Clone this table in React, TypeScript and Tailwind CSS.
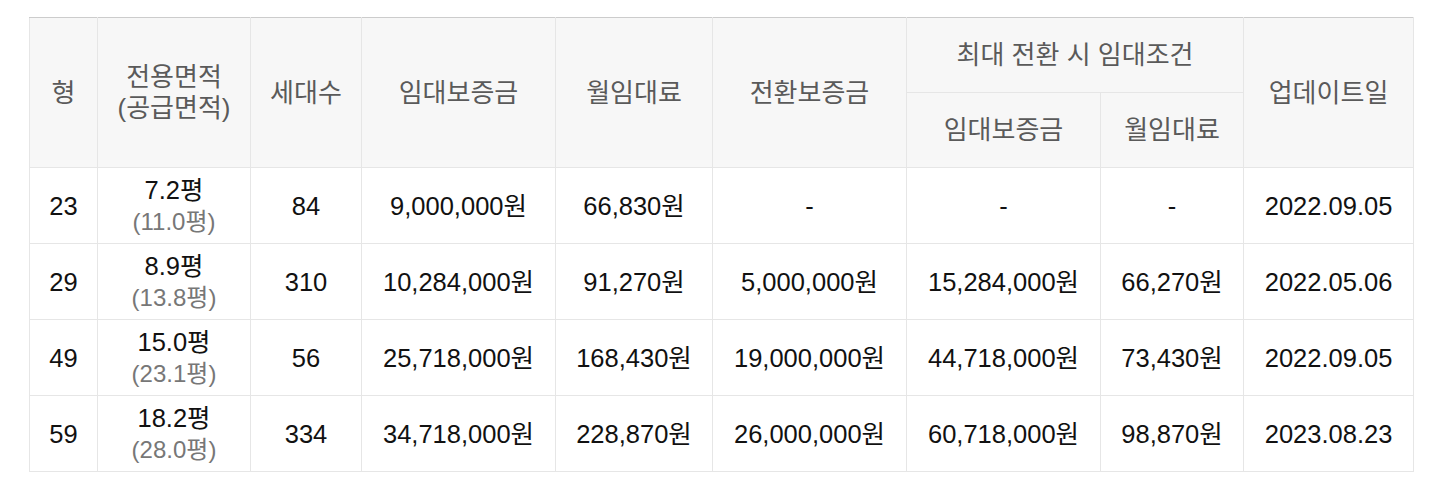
import React from "react";

const rows = [
  ["23", "7.2평", "(11.0평)", "84", "9,000,000원", "66,830원", "-", "-", "-", "2022.09.05"],
  ["29", "8.9평", "(13.8평)", "310", "10,284,000원", "91,270원", "5,000,000원", "15,284,000원", "66,270원", "2022.05.06"],
  ["49", "15.0평", "(23.1평)", "56", "25,718,000원", "168,430원", "19,000,000원", "44,718,000원", "73,430원", "2022.09.05"],
  ["59", "18.2평", "(28.0평)", "334", "34,718,000원", "228,870원", "26,000,000원", "60,718,000원", "98,870원", "2023.08.23"],
];

const widths = [68, 153, 111, 194, 157, 194, 194, 143, 170];

export default function App() {
  const th = "border border-[#e6e6e6] bg-[#f7f7f7] font-normal text-[#5a5a5a] text-[26px] text-center align-middle";
  const td = "border border-[#e6e6e6] text-center align-middle text-[#111]";
  return (
    <div className="w-[1450px] h-[482px] bg-white pt-[17px] pl-[29px]" style={{ fontFamily: '"Liberation Sans", "Noto Sans CJK KR", sans-serif' }}>
      <table className="border-collapse table-fixed w-[1385px] text-[25.5px] leading-[30px] border-t border-t-[#cccccc]">
        <colgroup>
          {widths.map((w, i) => (
            <col key={i} style={{ width: w }} />
          ))}
        </colgroup>
        <thead>
          <tr className="h-[75px]">
            <th rowSpan={2} className={th + " border-t-[#cccccc]"}>형</th>
            <th rowSpan={2} className={th + " border-t-[#cccccc] leading-[31px]"}>전용면적<br />(공급면적)</th>
            <th rowSpan={2} className={th + " border-t-[#cccccc]"}>세대수</th>
            <th rowSpan={2} className={th + " border-t-[#cccccc]"}>임대보증금</th>
            <th rowSpan={2} className={th + " border-t-[#cccccc]"}>월임대료</th>
            <th rowSpan={2} className={th + " border-t-[#cccccc]"}>전환보증금</th>
            <th colSpan={2} className={th + " border-t-[#cccccc]"}>최대 전환 시 임대조건</th>
            <th rowSpan={2} className={th + " border-t-[#cccccc]"}>업데이트일</th>
          </tr>
          <tr className="h-[75px]">
            <th className={th}>임대보증금</th>
            <th className={th}>월임대료</th>
          </tr>
        </thead>
        <tbody>
          {rows.map((r, i) => (
            <tr key={i} className="h-[76px]">
              <td className={td}>{r[0]}</td>
              <td className={td}>
                <div className="leading-[31px]">{r[1]}</div>
                <div className="leading-[31px] text-[#777] text-[24px]">{r[2]}</div>
              </td>
              {r.slice(3).map((c, j) => (
                <td key={j} className={td}>{c}</td>
              ))}
            </tr>
          ))}
        </tbody>
      </table>
    </div>
  );
}
